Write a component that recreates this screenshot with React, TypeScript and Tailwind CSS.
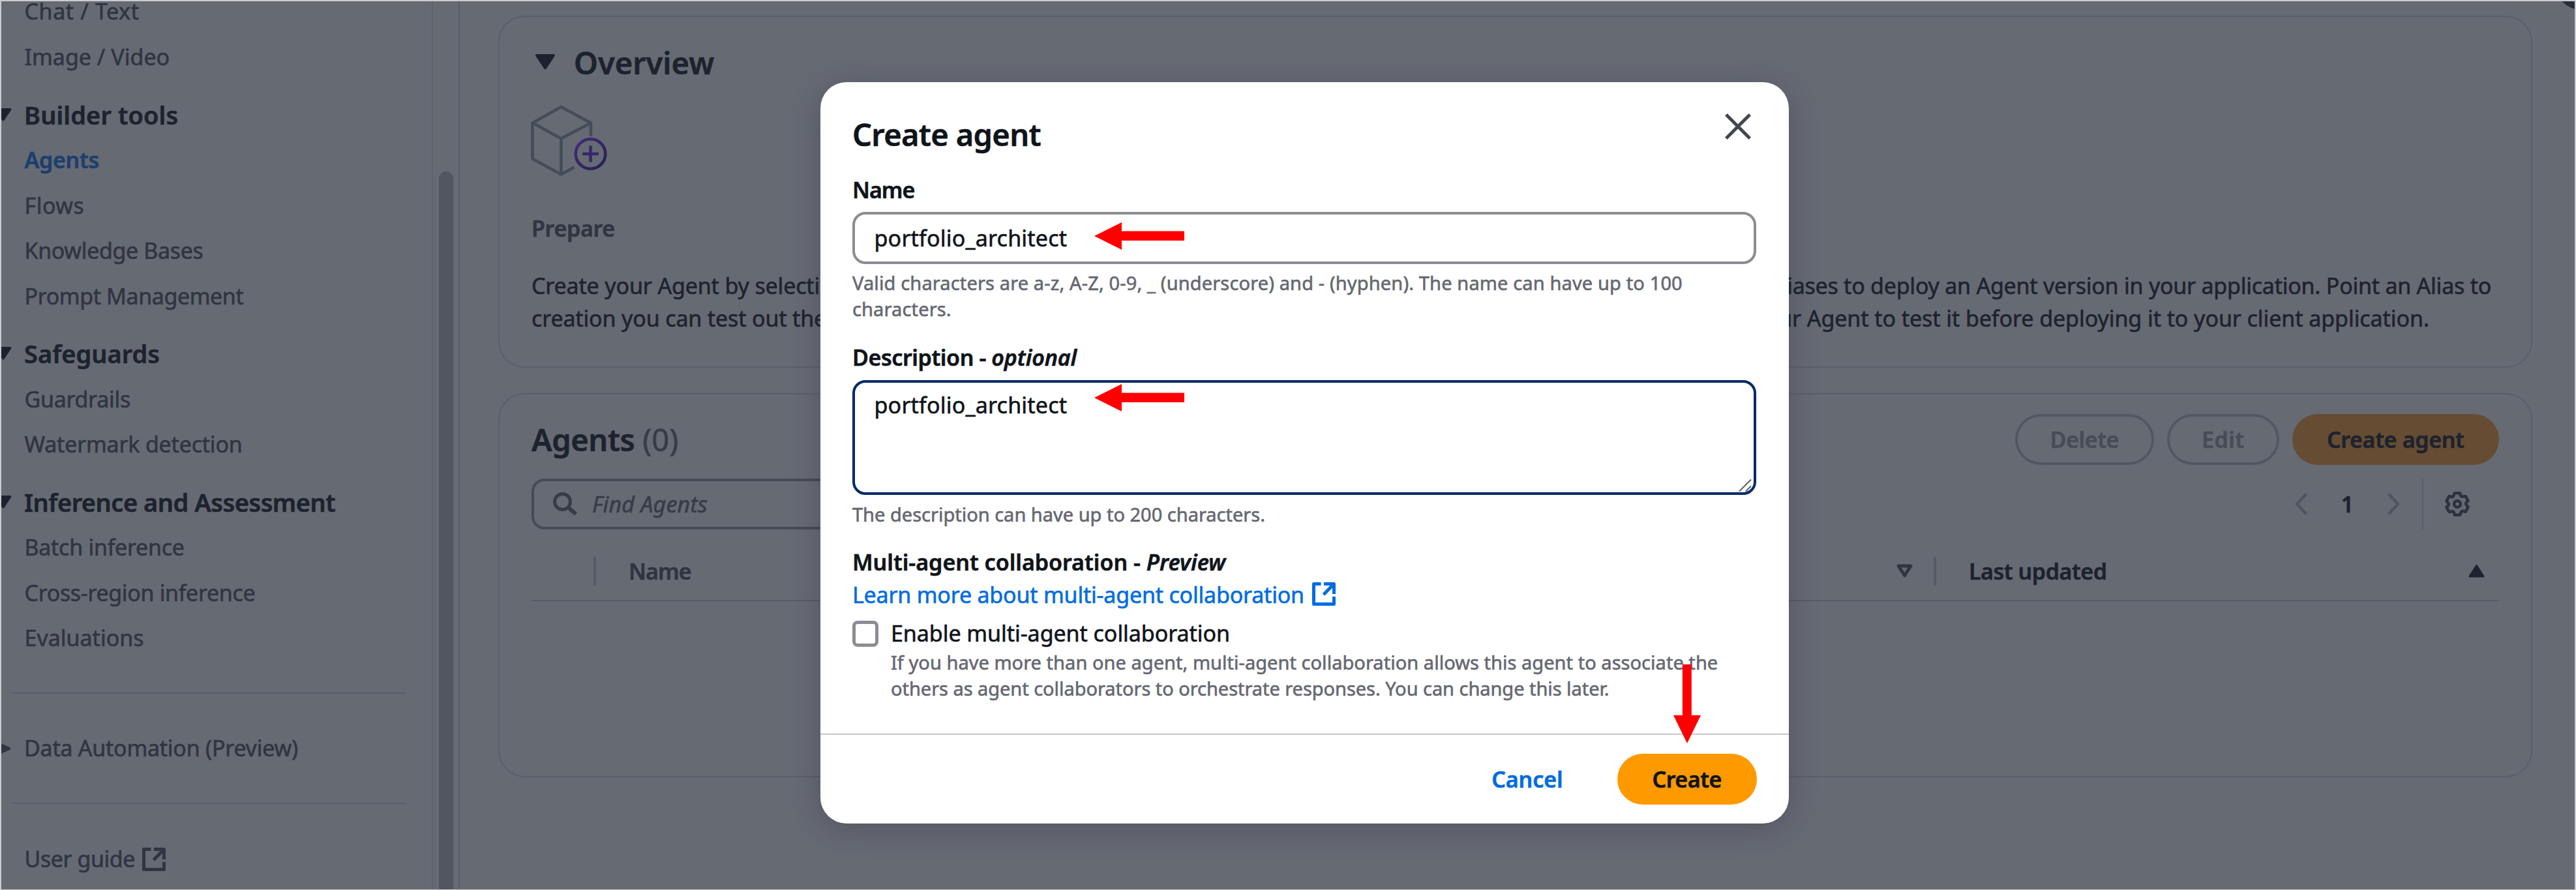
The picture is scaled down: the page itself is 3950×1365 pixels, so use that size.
import type { ReactNode } from 'react';

/* ---------- icons ---------- */

function ExternalIcon({ className }: { className: string }) {
  return (
    <svg viewBox="0 0 36 36" className={className} fill="none" stroke="currentColor" strokeWidth="5" strokeLinejoin="round">
      <path d="M13.500 2.500H2.500V33.500H33.500V22" />
      <path d="M18 2.500H33.500V18M33 3L17.500 19" />
    </svg>
  );
}

function TriangleDown({ className }: { className: string }) {
  return (
    <svg viewBox="0 0 30 24" className={className} fill="currentColor" stroke="currentColor" strokeWidth="4" strokeLinejoin="round">
      <path d="M2 2H28L15 21.500Z" />
    </svg>
  );
}

const gearPoints = Array.from({ length: 6 }, (_, i) => i * 60)
  .flatMap((deg) => {
    const turn = (x: number, y: number, a: number) => {
      const r = (a * Math.PI) / 180;
      return `${(20 + x * Math.cos(r) - y * Math.sin(r)).toFixed(2)},${(20 + x * Math.sin(r) + y * Math.cos(r)).toFixed(2)}`;
    };
    return [turn(-4, -16.8, deg), turn(4, -16.8, deg), turn(5.2, -12.6, deg), turn(0, -13, deg + 30)];
  })
  .join(' ');

function GearIcon() {
  return (
    <svg viewBox="0 0 40 40" className="size-[40px]" fill="none" stroke="currentColor" strokeWidth="4.600" strokeLinejoin="round">
      <polygon points={gearPoints} />
      <circle cx="20" cy="20" r="4.900" />
    </svg>
  );
}

function BoxIcon() {
  return (
    <svg viewBox="0 0 120 112" className="h-[112px] w-[120px] -ml-[1px]" fill="none" strokeWidth="4.600" strokeLinejoin="round">
      <path d="M92 50V29.500L46.500 5L2.500 29.500V84.500L46.500 108.500L66.500 97.500M2.500 29.500L46.500 53.500L92 29.500M46.500 53.500V108.500" stroke="#434d59" />
      <circle cx="91.500" cy="77" r="22.800" stroke="url(#addGradient)" />
      <path d="M91.500 64.500V89.500M79 77H104" stroke="#35286a" />
      <defs>
        <linearGradient id="addGradient" x1="0" y1="0" x2="1" y2="1">
          <stop offset="0" stopColor="#412c7a" />
          <stop offset="1" stopColor="#29204f" />
        </linearGradient>
      </defs>
    </svg>
  );
}

function LeftArrow({ className }: { className: string }) {
  return (
    <svg viewBox="0 0 138 42" className={className} fill="#ff0000">
      <path d="M0 21L42 0V13.500H138V28H42V42Z" />
    </svg>
  );
}

/* ---------- sidebar ---------- */

function NavItem({ children, className = '' }: { children: ReactNode; className?: string }) {
  return <div className={`flex h-[69.5px] shrink-0 items-center pl-[35.5px] ${className}`}>{children}</div>;
}

function NavHeading({ children, className = '' }: { children: ReactNode; className?: string }) {
  return (
    <div className="flex h-[88.5px] shrink-0 pt-[28px] text-[#1d232e]">
      <TriangleDown className="-ml-[10px] mt-[15px] h-[20px] w-[26px]" />
      <span className={`ml-[19px] text-[38px] leading-[50px] font-semibold ${className}`}>{children}</span>
    </div>
  );
}

function Sidebar() {
  return (
    <div className="flex h-full w-[703px] shrink-0 border-r-2 border-[#595e6a] text-[#2f3541]">
      <nav className="flex w-[662px] flex-col overflow-hidden border-r-2 border-[#5e636e]">
        <div className="flex h-[51px] shrink-0 pl-[35.5px] leading-[31px] tracking-[0.6px]">Chat / Text</div>
        <NavItem>Image / Video</NavItem>
        <NavHeading className="tracking-[0.1px]">Builder tools</NavHeading>
        <NavItem className="font-semibold tracking-[-0.3px] text-[#1d3f6d]">Agents</NavItem>
        <NavItem className="tracking-[0.5px]">Flows</NavItem>
        <NavItem className="tracking-[-0.36px]">Knowledge Bases</NavItem>
        <NavItem className="tracking-[-0.4px]">Prompt Management</NavItem>
        <NavHeading>Safeguards</NavHeading>
        <NavItem className="tracking-[-0.3px]">Guardrails</NavItem>
        <NavItem className="tracking-[-0.2px]">Watermark detection</NavItem>
        <NavHeading className="tracking-[-0.5px]">Inference and Assessment</NavHeading>
        <NavItem className="tracking-[-0.28px]">Batch inference</NavItem>
        <NavItem className="tracking-[-0.34px]">Cross-region inference</NavItem>
        <NavItem>Evaluations</NavItem>
        <div className="mt-[48px] mr-[40px] ml-[16px] h-[2px] shrink-0 bg-[#595e6a]" />
        <div className="mt-[49.5px] flex h-[69.5px] shrink-0 items-center tracking-[-0.25px]">
          <svg viewBox="0 0 16 22" className="h-[22px] w-[15px]" fill="currentColor">
            <path d="M-6 0L14 9Q16 11 14 13L-6 22Z" />
          </svg>
          <span className="ml-[20px]">Data Automation (Preview)</span>
        </div>
        <div className="mt-[48.5px] mr-[40px] ml-[16px] h-[2px] shrink-0 bg-[#595e6a]" />
        <NavItem className="mt-[50px] gap-[11px]">
          <span className="tracking-[-0.45px]">User guide</span>
          <ExternalIcon className="size-[36px]" />
        </NavItem>
      </nav>
      <div className="flex-1 pt-[261px] pl-[9px]">
        <div className="h-[1200px] w-[22px] rounded-full bg-[#525661]" />
      </div>
    </div>
  );
}

/* ---------- main content ---------- */

function OverviewPanel() {
  return (
    <section className="h-[540px] rounded-[40px] border-2 border-[#5a5f6b] px-[49px]">
      <div className="mt-[39.5px] flex h-[60px] items-center text-[#1d232e]">
        <TriangleDown className="-mt-[2px] ml-[6px] h-[24px] w-[30px]" />
        <h2 className="ml-[29px] text-[47px] leading-[60px] font-semibold">Overview</h2>
      </div>
      <div className="mt-[33.5px] h-[112px]">
        <BoxIcon />
      </div>
      <h3 className="mt-[54px] leading-[50px] font-semibold tracking-[-0.3px] text-[#2f3541]">Prepare</h3>
      <div className="mt-[39px] flex justify-between leading-[49.5px] whitespace-nowrap text-[#1d232e]">
        <p className="tracking-[-0.15px]">
          Create your Agent by selecting
          <br />
          creation you can test out the
        </p>
        <div className="flex flex-col items-end">
          <p className="pr-[12px] tracking-[-0.24px]">
            Aliases to deploy an Agent version in your application. Point an Alias to
          </p>
          <p className="pr-[107px] tracking-[-0.07px]">
            your Agent to test it before deploying it to your client application.
          </p>
        </div>
      </div>
    </section>
  );
}

function AgentsPanel() {
  return (
    <section className="mt-[38.5px] h-[589px] rounded-[40px] border-2 border-[#5a5f6b] px-[49px]">
      <div className="mt-[30px] flex h-[78px] items-center">
        <h2 className="text-[47px] leading-[60px] font-semibold tracking-[-0.4px] text-[#1d232e]">
          Agents <span className="font-normal tracking-normal text-[#363c48]">(0)</span>
        </h2>
        <div className="ml-auto flex h-full gap-[19.5px] font-semibold">
          <button className="w-[213.5px] rounded-full border-4 border-[#525763] pt-px tracking-[-0.4px] text-[#474c58]">Delete</button>
          <button className="w-[172.5px] rounded-full border-4 border-[#525763] pt-px tracking-[0.4px] text-[#474c58]">Edit</button>
          <button className="w-[317.5px] rounded-full bg-[#654c33] pt-px tracking-[-0.33px] text-[#1d232e]">Create agent</button>
        </div>
      </div>
      <div className="mt-[21px] flex h-[78px] items-center">
        <div className="flex h-full w-[1400px] items-center rounded-[20px] border-4 border-[#464b57] pl-[28px] text-[#363c48]">
          <svg viewBox="0 0 38 36" className="h-[36px] w-[38px]" fill="none" stroke="currentColor" strokeWidth="5">
            <circle cx="15.500" cy="14.500" r="12" />
            <path d="M24 23L36 33.500" strokeWidth="6" />
          </svg>
          <span className="mt-[2px] ml-[23px] tracking-[0.2px] italic">Find Agents</span>
        </div>
        <div className="ml-auto flex h-full items-center">
          <svg viewBox="0 0 20 34" className="h-[34px] w-[20px]" fill="none" stroke="#4f5460" strokeWidth="4.500">
            <path d="M17.500 1.500L3 17L17.500 32.500" />
          </svg>
          <span className="w-[121px] pt-px text-center font-semibold text-[#1d232e]">1</span>
          <svg viewBox="0 0 20 34" className="h-[34px] w-[20px]" fill="none" stroke="#4f5460" strokeWidth="4.500">
            <path d="M2.500 1.500L17 17L2.500 32.500" />
          </svg>
          <div className="ml-[34px] h-full w-[2px] bg-[#595e6a]" />
          <div className="mr-[44px] ml-[32px] text-[#2c323f]">
            <GearIcon />
          </div>
        </div>
      </div>
      <div className="mt-[20px] flex h-[90px] items-center border-b-2 border-[#565b66] font-semibold">
        <div className="w-[95px]" />
        <div className="h-[44px] w-[4px] bg-[#565b67]" />
        <div className="flex w-[2051px] items-center justify-between pr-[32px] pl-[50px] text-[#2f3541]">
          <span className="pt-[2px] tracking-[-0.9px]">Name</span>
          <svg viewBox="0 0 25 21" className="h-[21px] w-[25px]" fill="none" stroke="currentColor" strokeWidth="5" strokeLinejoin="round">
            <path d="M3 3H22L12.500 17.500Z" />
          </svg>
        </div>
        <div className="h-[44px] w-[4px] bg-[#565b67]" />
        <div className="flex flex-1 items-center justify-between pr-[22px] pl-[50px] text-[#1d232e]">
          <span className="pt-[2px] tracking-[-0.45px]">Last updated</span>
          <svg viewBox="0 0 25 21" className="h-[21px] w-[25px]" fill="currentColor" stroke="currentColor" strokeWidth="3" strokeLinejoin="round">
            <path d="M2 19H23L12.500 2.500Z" />
          </svg>
        </div>
      </div>
    </section>
  );
}

/* ---------- dialog ---------- */

function CreateAgentDialog() {
  return (
    <div className="flex h-[1137px] w-[1485px] flex-col rounded-[40px] bg-white text-[#0f141a] shadow-[0_8px_44px_rgba(40,42,62,0.32)]">
      <div className="px-[49.5px] pt-[50px]">
        <div className="flex items-start justify-between">
          <h1 className="text-[47px] leading-[60px] font-semibold tracking-[-0.65px]">Create agent</h1>
          <svg viewBox="0 0 40 40" className="-mt-[2px] mr-[8.5px] size-[40px]" fill="none" stroke="#424650" strokeWidth="5">
            <path d="M1.800 1.800L38.200 38.200M38.200 1.800L1.800 38.200" />
          </svg>
        </div>

        <div className="mt-[30px] leading-[50px] font-semibold tracking-[-1px]">Name</div>
        <div className="mt-[9px] flex h-[80px] items-center rounded-[20px] border-4 border-[#8c8c94] pt-px pl-[29.5px] tracking-[0.2px]">
          portfolio_architect
        </div>
        <p className="mt-[9px] text-[29px] leading-[40px] tracking-[0.14px] text-[#656871]">
          Valid characters are a-z, A-Z, 0-9, _ (underscore) and - (hyphen). The name can have up to 100
          <br />
          characters.
        </p>

        <div className="mt-[29px] leading-[50px] font-semibold tracking-[-0.4px]">
          Description - <i className="tracking-[-0.1px]">optional</i>
        </div>
        <div className="mt-[10px] flex h-[176px] rounded-[20px] border-4 border-[#002b66] pt-[9px] pl-[29.5px]">
          <span className="leading-[50px] tracking-[0.2px]">portfolio_architect</span>
          <svg viewBox="0 0 20 20" className="mr-[3px] mb-[1px] ml-auto size-[20px] self-end" stroke="#5c5c60" strokeWidth="2">
            <path d="M1 19.500L19 1.500M11 19.500L19 11.500" />
          </svg>
        </div>
        <p className="mt-[9.5px] text-[29px] leading-[40px] text-[#656871]">
          The description can have up to 200 characters.
        </p>

        <div className="mt-[29.5px] leading-[49.5px] font-semibold">
          Multi-agent collaboration - <i className="tracking-[0.1px]">Preview</i>
        </div>
        <div className="flex items-center gap-[12px] leading-[49.5px] tracking-[-0.2px] text-[#006ce0]">
          Learn more about multi-agent collaboration
          <ExternalIcon className="-mt-[2px] size-[36px]" />
        </div>
        <div className="mt-[9.5px] flex">
          <div className="mt-[5px] size-[40px] shrink-0 rounded-[8px] border-[5px] border-[#8c8c94]" />
          <div className="ml-[19px] whitespace-nowrap">
            <div className="leading-[49px] tracking-[-0.05px]">Enable multi-agent collaboration</div>
            <p className="text-[29px] leading-[40px] tracking-[-0.04px] text-[#656871]">
              <span className="tracking-[0.04px]">
                If you have more than one agent, multi-agent collaboration allows this agent to associate the
              </span>
              <br />
              others as agent collaborators to orchestrate responses. You can change this later.
            </p>
          </div>
        </div>
      </div>

      <div className="mt-auto flex h-[138px] items-start justify-end gap-[83.5px] border-t-2 border-[#c6c6cd] pt-[29px] pr-[49px] font-semibold">
        <button className="h-[78px] pt-px tracking-[-0.1px] text-[#006ce0]">Cancel</button>
        <button className="h-[78px] w-[213.5px] rounded-full bg-[#ff9900] pt-px tracking-[-0.45px]">Create</button>
      </div>
    </div>
  );
}

export default function App() {
  return (
    <div className="relative flex h-[1365px] w-full overflow-hidden border-2 border-b border-[#c9cccd] bg-[#666a73] font-['Noto_Sans','Open_Sans',sans-serif] text-[34px] [-webkit-text-stroke-width:0.6px]">
      <Sidebar />
      <main className="flex-1 pt-[22px] pr-[65px] pl-[59px]">
        <OverviewPanel />
        <AgentsPanel />
      </main>
      <div className="absolute -top-[67px] -right-[50px] size-[80px] rounded-full bg-[#262e3b]" />

      <div className="absolute top-[124px] left-[1255.5px]">
        <CreateAgentDialog />
      </div>

      <LeftArrow className="absolute top-[339px] left-[1675.5px] h-[42px] w-[138px]" />
      <LeftArrow className="absolute top-[587px] left-[1675.5px] h-[42px] w-[138px]" />
      <svg viewBox="0 0 42 121" className="absolute top-[1017px] left-[2564px] h-[121px] w-[42px]" fill="#ff0000">
        <path d="M13.800 0H27.800V78H42L21 121L0 78H13.800Z" />
      </svg>
    </div>
  );
}
